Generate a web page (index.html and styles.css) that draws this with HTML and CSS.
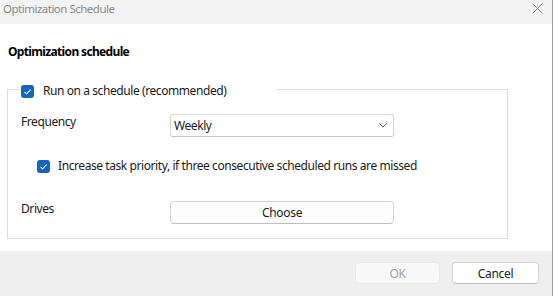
FILE: index.html
```html
<!DOCTYPE html>
<html lang="en">
  <head>
    <meta charset="UTF-8" />
    <title>Optimization Schedule</title>
    <link rel="stylesheet" href="styles.css">
  </head>
  <body>
    <div class="window">
      <div class="titlebar">
        <span class="titlebar__text">Optimization Schedule</span>
        <svg class="titlebar__close" width="11" height="11" viewBox="0 0 11 11">
          <path d="M0.5 0.5 L10.5 10.5 M10.5 0.5 L0.5 10.5" stroke="#8c8c8c" stroke-width="1" fill="none" />
        </svg>
      </div>

      <div class="content">
        <h1 class="content__title">Optimization schedule</h1>

        <fieldset class="group">
          <legend class="group__legend">
            <label class="check">
              <span class="check__box">
                <svg width="13" height="13" viewBox="0 0 13 13">
                  <path d="M3.5 6.8 L5.6 8.8 L9.6 4.6" stroke="#fff" stroke-width="1.1" fill="none" />
                </svg>
              </span>
              Run on a schedule (recommended)
            </label>
          </legend>

          <div class="group__row group__row--first">
            <span class="group__label">Frequency</span>
            <div class="select">
              <span>Weekly</span>
              <svg width="8" height="5" viewBox="0 0 8 5">
                <path d="M0.5 0.5 L4 4 L7.5 0.5" stroke="#666" stroke-width="1" fill="none" />
              </svg>
            </div>
          </div>

          <label class="check check--indent">
            <span class="check__box">
              <svg width="13" height="13" viewBox="0 0 13 13">
                <path d="M3.5 6.8 L5.6 8.8 L9.6 4.6" stroke="#fff" stroke-width="1.1" fill="none" />
              </svg>
            </span>
            Increase task priority, if three consecutive scheduled runs are missed
          </label>

          <div class="group__row group__row--drives">
            <span class="group__label">Drives</span>
            <button class="btn btn--wide">Choose</button>
          </div>
        </fieldset>
      </div>

      <div class="footer">
        <button class="btn btn--ok" disabled>OK</button>
        <button class="btn btn--cancel">Cancel</button>
      </div>
    </div>
  </body>
</html>
```

FILE: styles.css
```css
* {
  box-sizing: border-box;
  margin: 0;
  padding: 0;
}
body {
  font-family: "Noto Sans", sans-serif;
  font-size: 12px;
  letter-spacing: -0.42px;
  color: #1b1b1b;
  background: #fff;
}
.window {
  width: 553px;
  height: 296px;
  border-right: 1px solid #a0a0a0;
  display: flex;
  flex-direction: column;
}
.titlebar {
  height: 24px;
  flex: none;
  background: #f3f3f3;
  display: flex;
  justify-content: space-between;
  align-items: flex-start;
  padding: 1px 9px 0 3px;
  color: #8c8c8c;
  font-size: 11.5px;
  letter-spacing: -0.5px;
  line-height: 16px;
}
.titlebar__close {
  margin-top: 2px;
}
.content {
  flex: 1;
  padding-top: 20px;
  background: #fff;
}
.content__title {
  font-size: 12px;
  font-weight: 700;
  letter-spacing: -0.65px;
  line-height: 16px;
  color: #000;
  margin-left: 8px;
}
.group {
  margin: 24px 0 0 7px;
  width: 501px;
  border: 1px solid #dcdcdc;
  padding: 0 13px 14px;
}
/* legend kept short so the border line sits a bit above the checkbox centre */
.group__legend {
  width: 257px;
  height: 11px;
  margin-left: -1px;
  padding-left: 1px;
}
.check {
  display: flex;
  align-items: center;
  gap: 9px;
  line-height: 14px;
}
.check__box {
  width: 13px;
  height: 13px;
  border-radius: 3px;
  background: #1565c0;
  display: flex;
}
.check--indent {
  margin: 22px 0 0 16px;
  gap: 8px;
}
.group__row {
  display: grid;
  grid-template-columns: 149px 224px;
  align-items: start;
}
.group__row--first {
  margin-top: 19px;
}
.group__row--drives {
  margin-top: 28px;
}
.group__label {
  line-height: 16px;
}
.select {
  height: 23px;
  border: 1px solid #d9d9d9;
  border-bottom-color: #c6c6c6;
  border-radius: 3px;
  display: flex;
  justify-content: space-between;
  align-items: center;
  padding: 0 6px 0 3px;
  line-height: 16px;
}
.btn {
  font-family: inherit;
  font-size: 12px;
  letter-spacing: -0.3px;
  height: 22px;
  border-radius: 4px;
  border: 1px solid #d4d4d4;
  border-bottom-color: #bfbfbf;
  background: #fdfdfd;
  color: #1b1b1b;
}
.btn--wide {
  height: 23px;
}
.footer {
  height: 45px;
  flex: none;
  background: #efefef;
  display: flex;
  justify-content: flex-end;
  align-items: flex-start;
  gap: 12px;
  padding: 11px 13px 0 0;
}
.btn--ok {
  width: 85px;
  background: #f8f8f8;
  border-color: #e8e8e8;
  color: #a3a3a3;
}
.btn--cancel {
  width: 87px;
  background: #fff;
}
```
